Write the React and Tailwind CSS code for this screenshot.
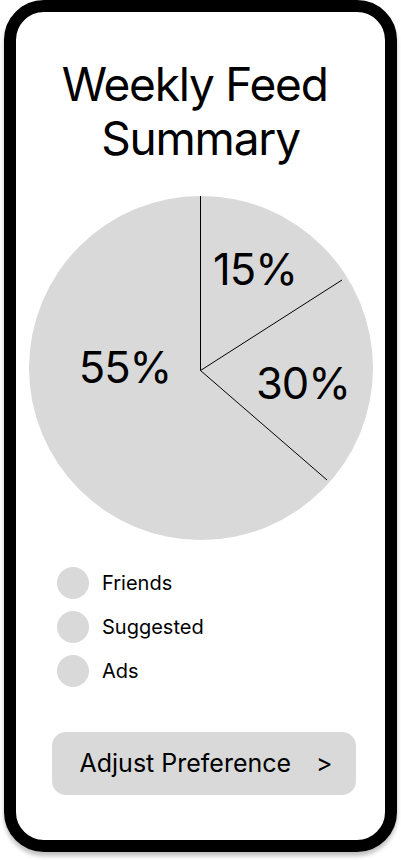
import React from 'react';

const slices = [
  { label: '15%', x: 255, y: 285 },
  { label: '30%', x: 303, y: 399 },
  { label: '55%', x: 125, y: 383 },
];

const legend = ['Friends', 'Suggested', 'Ads'];

const PieChart = () => (
  <svg width="344" height="344" viewBox="29 196 344 344" className="block">
    <circle cx="201" cy="368" r="172" fill="#d9d9d9" />
    <line x1="200.5" y1="196" x2="200.5" y2="370.5" stroke="#000" strokeWidth="1" />
    <line x1="200.5" y1="370.5" x2="342" y2="280" stroke="#000" strokeWidth="1" />
    <line x1="200.5" y1="370.5" x2="327" y2="480" stroke="#000" strokeWidth="1" />
    {slices.map(s => (
      <text
        key={s.label}
        x={s.x}
        y={s.y}
        textAnchor="middle"
        fontSize="43.5"
        letterSpacing="-1"
        fontFamily="Inter, 'Liberation Sans', sans-serif"
        fill="#000"
      >
        {s.label}
      </text>
    ))}
  </svg>
);

export default function App() {
  return (
    <div className="w-[401px] h-[860px] bg-white font-['Inter','Liberation_Sans',sans-serif] text-black">
      {/* phone frame */}
      <div className="ml-[4px] w-[393px] h-[852px] rounded-[40px] border-[12px] border-black bg-white shadow-[0_4px_4px_rgba(0,0,0,0.25)] flex flex-col items-center">
        <h1 className="mt-[45px] text-center text-[46px] leading-[54px] font-normal tracking-[-1.2px] whitespace-nowrap">
          Weekly Feed{'\u00a0'}
          <br />
          Summary
        </h1>

        <div className="mt-[31px]">
          <PieChart />
        </div>

        <div className="mt-[27px] self-start ml-[41px] flex flex-col gap-[12px]">
          {legend.map(item => (
            <div key={item} className="flex items-center gap-[13px]">
              <div className="w-[32px] h-[32px] rounded-full bg-[#d9d9d9]" />
              <span className="text-[20px] leading-[24px]">{item}</span>
            </div>
          ))}
        </div>

        <button className="mt-[45px] ml-[6px] w-[304px] h-[63px] rounded-[14px] bg-[#d9d9d9] flex items-center pl-[28px] pr-[23px] text-[25px]">
          <span className="flex-1 text-left">Adjust Preference</span>
          <span>&gt;</span>
        </button>
      </div>
    </div>
  );
}
